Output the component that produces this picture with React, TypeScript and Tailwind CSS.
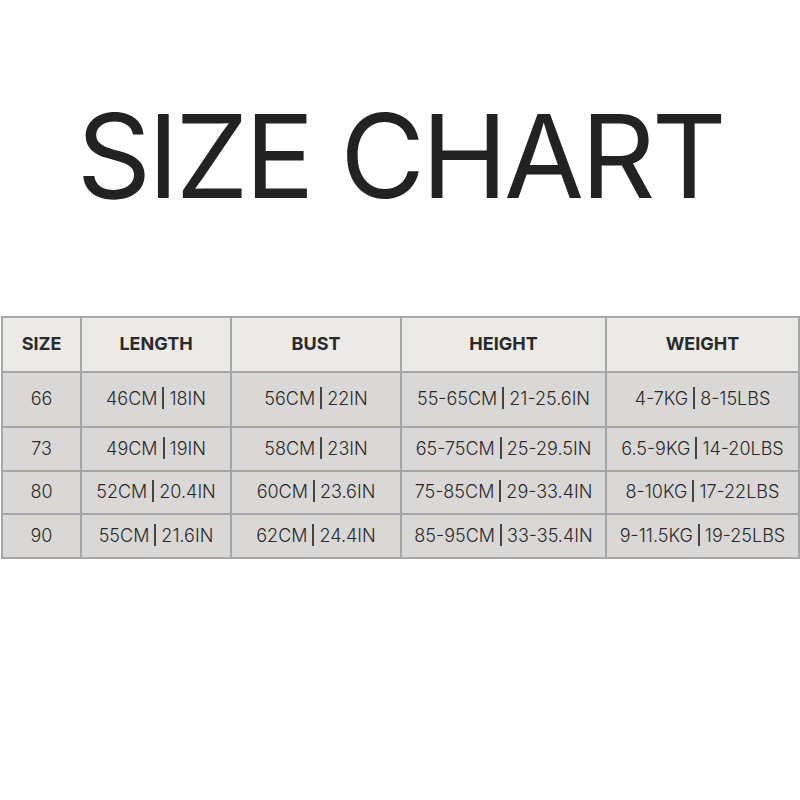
import React from "react";

const rows = [
  ["66", "46CM | 18IN", "56CM | 22IN", "55-65CM | 21-25.6IN", "4-7KG | 8-15LBS", "h-[55px]"],
  ["73", "49CM | 19IN", "58CM | 23IN", "65-75CM | 25-29.5IN", "6.5-9KG | 14-20LBS", "h-[44px]"],
  ["80", "52CM | 20.4IN", "60CM | 23.6IN", "75-85CM | 29-33.4IN", "8-10KG | 17-22LBS", "h-[43px]"],
  ["90", "55CM | 21.6IN", "62CM | 24.4IN", "85-95CM | 33-35.4IN", "9-11.5KG | 19-25LBS", "h-[44px]"],
];

function Cell({ text }: { text: string }) {
  const parts = text.split(" | ");
  if (parts.length === 1) return <>{text}</>;
  return (
    <>
      {parts[0]}
      <span className="mx-[5px] inline-block align-middle w-[2px] h-[22px] bg-[#444444] relative top-[-2px]"></span>
      {parts[1]}
    </>
  );
}

export default function App() {
  return (
    <div className="w-[800px] h-[800px] bg-white flex flex-col" style={{ fontFamily: "Inter, 'Liberation Sans', sans-serif" }}>
      <div className="h-[316px] flex justify-center">
        <h1 className="mt-[86px] text-[116px] leading-[140px] text-[#222222] font-normal tracking-[-3.5px]">SIZE CHART</h1>
      </div>
      <table className="table-fixed border-collapse w-[797px] ml-[1px] text-[#2a2a2a]">
        <colgroup>
          <col className="w-[79px]" />
          <col className="w-[150px]" />
          <col className="w-[170px]" />
          <col className="w-[205px]" />
          <col className="w-[193px]" />
        </colgroup>
        <thead>
          <tr className="h-[55px] bg-[#ebeae6]">
            {["SIZE", "LENGTH", "BUST", "HEIGHT", "WEIGHT"].map((h) => (
              <th key={h} className="border-2 border-[#a6a6a6] text-[18px] font-bold text-center pb-[2px]">{h}</th>
            ))}
          </tr>
        </thead>
        <tbody>
          {rows.map((r) => (
            <tr key={r[0]} className={`${r[5]} bg-[#d9d8d6]`}>
              {r.slice(0, 5).map((c, i) => (
                <td key={i} className="border-2 border-[#a6a6a6] text-[18px] font-light text-center whitespace-nowrap pb-[2px]">
                  <Cell text={c} />
                </td>
              ))}
            </tr>
          ))}
        </tbody>
      </table>
    </div>
  );
}
